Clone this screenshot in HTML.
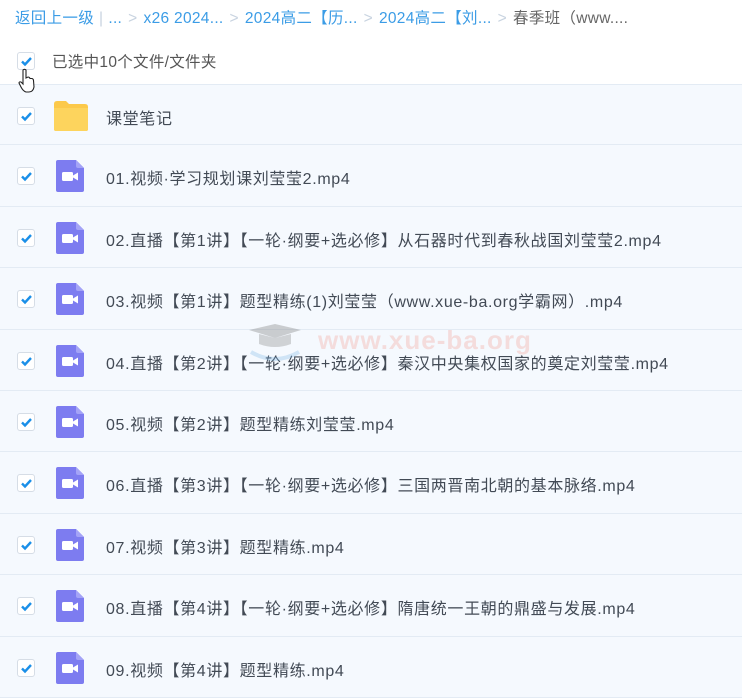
<!DOCTYPE html>
<html><head><meta charset="utf-8"><style>
*{margin:0;padding:0;box-sizing:border-box}
body{width:742px;height:696px;overflow:hidden;background:#fff;font-family:"Liberation Sans","Noto Sans CJK SC",sans-serif;position:relative}
.bc{position:absolute;left:15px;top:6px;font-size:15.5px;color:#3b9ce6;white-space:nowrap;letter-spacing:0.3px}
.bc .s{color:#c8d3e0;margin:0 6px}
.bc .g{color:#666}
.bc .p{color:#c8d3e0;margin:0 5px}
.cb{position:absolute;left:17px;width:18px;height:18px;border:1px solid #d6dde6;border-radius:3px;background:#fff}
.cb svg{position:absolute;left:2px;top:2px}
.sel{position:absolute;left:52px;top:50px;font-size:15.5px;color:#555;letter-spacing:0.3px}
.row{position:absolute;left:0;width:742px;height:61.4px;background:#f5f9fe;border-bottom:1px solid #e3ebf4}
.row .cb{top:22px}
.row .ic{position:absolute;left:55px;top:14px}
.row .t{position:absolute;left:106px;top:20px;font-size:16px;color:#424a55;white-space:nowrap;letter-spacing:0.65px}
</style></head><body>
<div class="bc">返回上一级<span class="p">|</span>...<span class="s">&gt;</span>x26 2024...<span class="s">&gt;</span>2024高二【历...<span class="s">&gt;</span>2024高二【刘...<span class="s">&gt;</span><span class="g">春季班（www....</span></div>
<div class="cb" style="top:52px"><svg width="13" height="13" viewBox="0 0 13 13"><path d="M2 6.5 L5 9.5 L11 3" fill="none" stroke="#1a8fe8" stroke-width="2.4"/></svg></div>
<div class="sel">已选中10个文件/文件夹</div>

<div class="row" style="top:84px;border-top:1px solid #e3ebf4"><div class="cb"><svg width="13" height="13" viewBox="0 0 13 13"><path d="M2 6.5 L5 9.5 L11 3" fill="none" stroke="#1a8fe8" stroke-width="2.4"/></svg></div><svg class="ic" width="36" height="32" viewBox="0 0 36 32" style="left:53px;top:15px"><path d="M1 4 Q1 1 4 1 H13 L16 4 H32 Q35 4 35 7 V29 Q35 31 33 31 H3 Q1 31 1 29Z" fill="#fcc94a"/><path d="M1 8 H35 V29 Q35 31 33 31 H3 Q1 31 1 29Z" fill="#fdd45d"/></svg><div class="t">课堂笔记</div></div>

<div class="row" style="top:145.4px"><div class="cb"><svg width="13" height="13" viewBox="0 0 13 13"><path d="M2 6.5 L5 9.5 L11 3" fill="none" stroke="#1a8fe8" stroke-width="2.4"/></svg></div><svg class="ic" width="30" height="34" viewBox="0 0 30 34"><path d="M3 1 H21 L29 9 V31 Q29 33 27 33 H3 Q1 33 1 31 V3 Q1 1 3 1Z" fill="#7d7cf0"/><path d="M21 1 V7 Q21 9 23 9 H29Z" fill="#a4a3f7"/><rect x="7" y="13" width="11" height="9" rx="1.5" fill="#fff"/><path d="M18 16.5 L23 13.5 V21.5 L18 18.5Z" fill="#fff"/></svg><div class="t">01.视频·学习规划课刘莹莹2.mp4</div></div>

<div class="row" style="top:206.8px"><div class="cb"><svg width="13" height="13" viewBox="0 0 13 13"><path d="M2 6.5 L5 9.5 L11 3" fill="none" stroke="#1a8fe8" stroke-width="2.4"/></svg></div><svg class="ic" width="30" height="34" viewBox="0 0 30 34"><path d="M3 1 H21 L29 9 V31 Q29 33 27 33 H3 Q1 33 1 31 V3 Q1 1 3 1Z" fill="#7d7cf0"/><path d="M21 1 V7 Q21 9 23 9 H29Z" fill="#a4a3f7"/><rect x="7" y="13" width="11" height="9" rx="1.5" fill="#fff"/><path d="M18 16.5 L23 13.5 V21.5 L18 18.5Z" fill="#fff"/></svg><div class="t">02.直播【第1讲】【一轮·纲要+选必修】从石器时代到春秋战国刘莹莹2.mp4</div></div>

<div class="row" style="top:268.2px"><div class="cb"><svg width="13" height="13" viewBox="0 0 13 13"><path d="M2 6.5 L5 9.5 L11 3" fill="none" stroke="#1a8fe8" stroke-width="2.4"/></svg></div><svg class="ic" width="30" height="34" viewBox="0 0 30 34"><path d="M3 1 H21 L29 9 V31 Q29 33 27 33 H3 Q1 33 1 31 V3 Q1 1 3 1Z" fill="#7d7cf0"/><path d="M21 1 V7 Q21 9 23 9 H29Z" fill="#a4a3f7"/><rect x="7" y="13" width="11" height="9" rx="1.5" fill="#fff"/><path d="M18 16.5 L23 13.5 V21.5 L18 18.5Z" fill="#fff"/></svg><div class="t">03.视频【第1讲】题型精练(1)刘莹莹（www.xue-ba.org学霸网）.mp4</div></div>

<div class="row" style="top:329.6px"><div class="cb"><svg width="13" height="13" viewBox="0 0 13 13"><path d="M2 6.5 L5 9.5 L11 3" fill="none" stroke="#1a8fe8" stroke-width="2.4"/></svg></div><svg class="ic" width="30" height="34" viewBox="0 0 30 34"><path d="M3 1 H21 L29 9 V31 Q29 33 27 33 H3 Q1 33 1 31 V3 Q1 1 3 1Z" fill="#7d7cf0"/><path d="M21 1 V7 Q21 9 23 9 H29Z" fill="#a4a3f7"/><rect x="7" y="13" width="11" height="9" rx="1.5" fill="#fff"/><path d="M18 16.5 L23 13.5 V21.5 L18 18.5Z" fill="#fff"/></svg><div class="t">04.直播【第2讲】【一轮·纲要+选必修】秦汉中央集权国家的奠定刘莹莹.mp4</div></div>

<div class="row" style="top:391px"><div class="cb"><svg width="13" height="13" viewBox="0 0 13 13"><path d="M2 6.5 L5 9.5 L11 3" fill="none" stroke="#1a8fe8" stroke-width="2.4"/></svg></div><svg class="ic" width="30" height="34" viewBox="0 0 30 34"><path d="M3 1 H21 L29 9 V31 Q29 33 27 33 H3 Q1 33 1 31 V3 Q1 1 3 1Z" fill="#7d7cf0"/><path d="M21 1 V7 Q21 9 23 9 H29Z" fill="#a4a3f7"/><rect x="7" y="13" width="11" height="9" rx="1.5" fill="#fff"/><path d="M18 16.5 L23 13.5 V21.5 L18 18.5Z" fill="#fff"/></svg><div class="t">05.视频【第2讲】题型精练刘莹莹.mp4</div></div>

<div class="row" style="top:452.4px"><div class="cb"><svg width="13" height="13" viewBox="0 0 13 13"><path d="M2 6.5 L5 9.5 L11 3" fill="none" stroke="#1a8fe8" stroke-width="2.4"/></svg></div><svg class="ic" width="30" height="34" viewBox="0 0 30 34"><path d="M3 1 H21 L29 9 V31 Q29 33 27 33 H3 Q1 33 1 31 V3 Q1 1 3 1Z" fill="#7d7cf0"/><path d="M21 1 V7 Q21 9 23 9 H29Z" fill="#a4a3f7"/><rect x="7" y="13" width="11" height="9" rx="1.5" fill="#fff"/><path d="M18 16.5 L23 13.5 V21.5 L18 18.5Z" fill="#fff"/></svg><div class="t">06.直播【第3讲】【一轮·纲要+选必修】三国两晋南北朝的基本脉络.mp4</div></div>

<div class="row" style="top:513.8px"><div class="cb"><svg width="13" height="13" viewBox="0 0 13 13"><path d="M2 6.5 L5 9.5 L11 3" fill="none" stroke="#1a8fe8" stroke-width="2.4"/></svg></div><svg class="ic" width="30" height="34" viewBox="0 0 30 34"><path d="M3 1 H21 L29 9 V31 Q29 33 27 33 H3 Q1 33 1 31 V3 Q1 1 3 1Z" fill="#7d7cf0"/><path d="M21 1 V7 Q21 9 23 9 H29Z" fill="#a4a3f7"/><rect x="7" y="13" width="11" height="9" rx="1.5" fill="#fff"/><path d="M18 16.5 L23 13.5 V21.5 L18 18.5Z" fill="#fff"/></svg><div class="t">07.视频【第3讲】题型精练.mp4</div></div>

<div class="row" style="top:575.2px"><div class="cb"><svg width="13" height="13" viewBox="0 0 13 13"><path d="M2 6.5 L5 9.5 L11 3" fill="none" stroke="#1a8fe8" stroke-width="2.4"/></svg></div><svg class="ic" width="30" height="34" viewBox="0 0 30 34"><path d="M3 1 H21 L29 9 V31 Q29 33 27 33 H3 Q1 33 1 31 V3 Q1 1 3 1Z" fill="#7d7cf0"/><path d="M21 1 V7 Q21 9 23 9 H29Z" fill="#a4a3f7"/><rect x="7" y="13" width="11" height="9" rx="1.5" fill="#fff"/><path d="M18 16.5 L23 13.5 V21.5 L18 18.5Z" fill="#fff"/></svg><div class="t">08.直播【第4讲】【一轮·纲要+选必修】隋唐统一王朝的鼎盛与发展.mp4</div></div>

<div class="row" style="top:636.6px"><div class="cb"><svg width="13" height="13" viewBox="0 0 13 13"><path d="M2 6.5 L5 9.5 L11 3" fill="none" stroke="#1a8fe8" stroke-width="2.4"/></svg></div><svg class="ic" width="30" height="34" viewBox="0 0 30 34"><path d="M3 1 H21 L29 9 V31 Q29 33 27 33 H3 Q1 33 1 31 V3 Q1 1 3 1Z" fill="#7d7cf0"/><path d="M21 1 V7 Q21 9 23 9 H29Z" fill="#a4a3f7"/><rect x="7" y="13" width="11" height="9" rx="1.5" fill="#fff"/><path d="M18 16.5 L23 13.5 V21.5 L18 18.5Z" fill="#fff"/></svg><div class="t">09.视频【第4讲】题型精练.mp4</div></div>

<svg style="position:absolute;left:18px;top:68px;z-index:5" width="18" height="26" viewBox="0 0 18 26"><path d="M5 2 Q6.5 0.5 8 2 L8 10 L10 9 Q11.5 9 12 10.5 L14 10.5 Q15.5 11 15.5 12.5 L16 19 Q15 24 11 24 L8 24 Q5 23 3 19 L1 15 Q1 13.5 3 14 L5 16 Z" fill="#fff" stroke="#222" stroke-width="1.1"/></svg>
<div style="position:absolute;left:318px;top:325px;font-size:26px;font-weight:bold;color:rgba(240,120,100,0.22);letter-spacing:1px">www.xue-ba.org</div>
<svg style="position:absolute;left:245px;top:322px" width="60" height="46" viewBox="0 0 60 46"><path d="M4 8 L30 2 L56 8 L30 16Z" fill="rgba(120,120,120,0.35)"/><path d="M14 12 V22 Q30 28 46 22 V12 L30 16Z" fill="rgba(120,120,120,0.3)"/><path d="M6 30 Q30 44 54 30" fill="none" stroke="rgba(120,180,230,0.3)" stroke-width="4"/></svg>
</body></html>
